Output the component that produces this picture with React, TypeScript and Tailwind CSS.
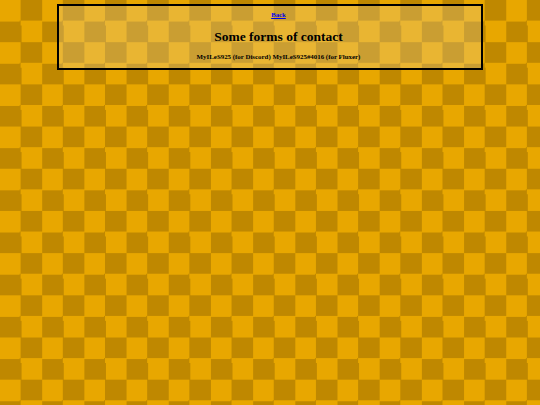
export default function App() {
  return (
    <div className="min-h-screen bg-[repeating-conic-gradient(#bf8800_0_25%,#e8a700_0_50%)] bg-[length:42.1875px_42.1875px] pt-[4px] font-['Liberation_Serif',serif] text-black">
      {/* Contact panel */}
      <div className="mx-auto w-[426px] border-2 border-black bg-[rgba(235,225,200,0.25)] pl-[17px] pt-[5px] pb-[7px] text-center font-bold">
        <a href="#" className="block text-[6.75px] leading-[8px] text-[#0000ee] underline">
          Back
        </a>
        <h1 className="mt-[10px] text-[13.5px] leading-[16px] font-bold">Some forms of contact</h1>
        <p className="mt-[8px] text-[6.9px] leading-[8px]">
          MyILeS925 (for Discord) MyILeS925#4016 (for Fluxer)
        </p>
      </div>
    </div>
  );
}
